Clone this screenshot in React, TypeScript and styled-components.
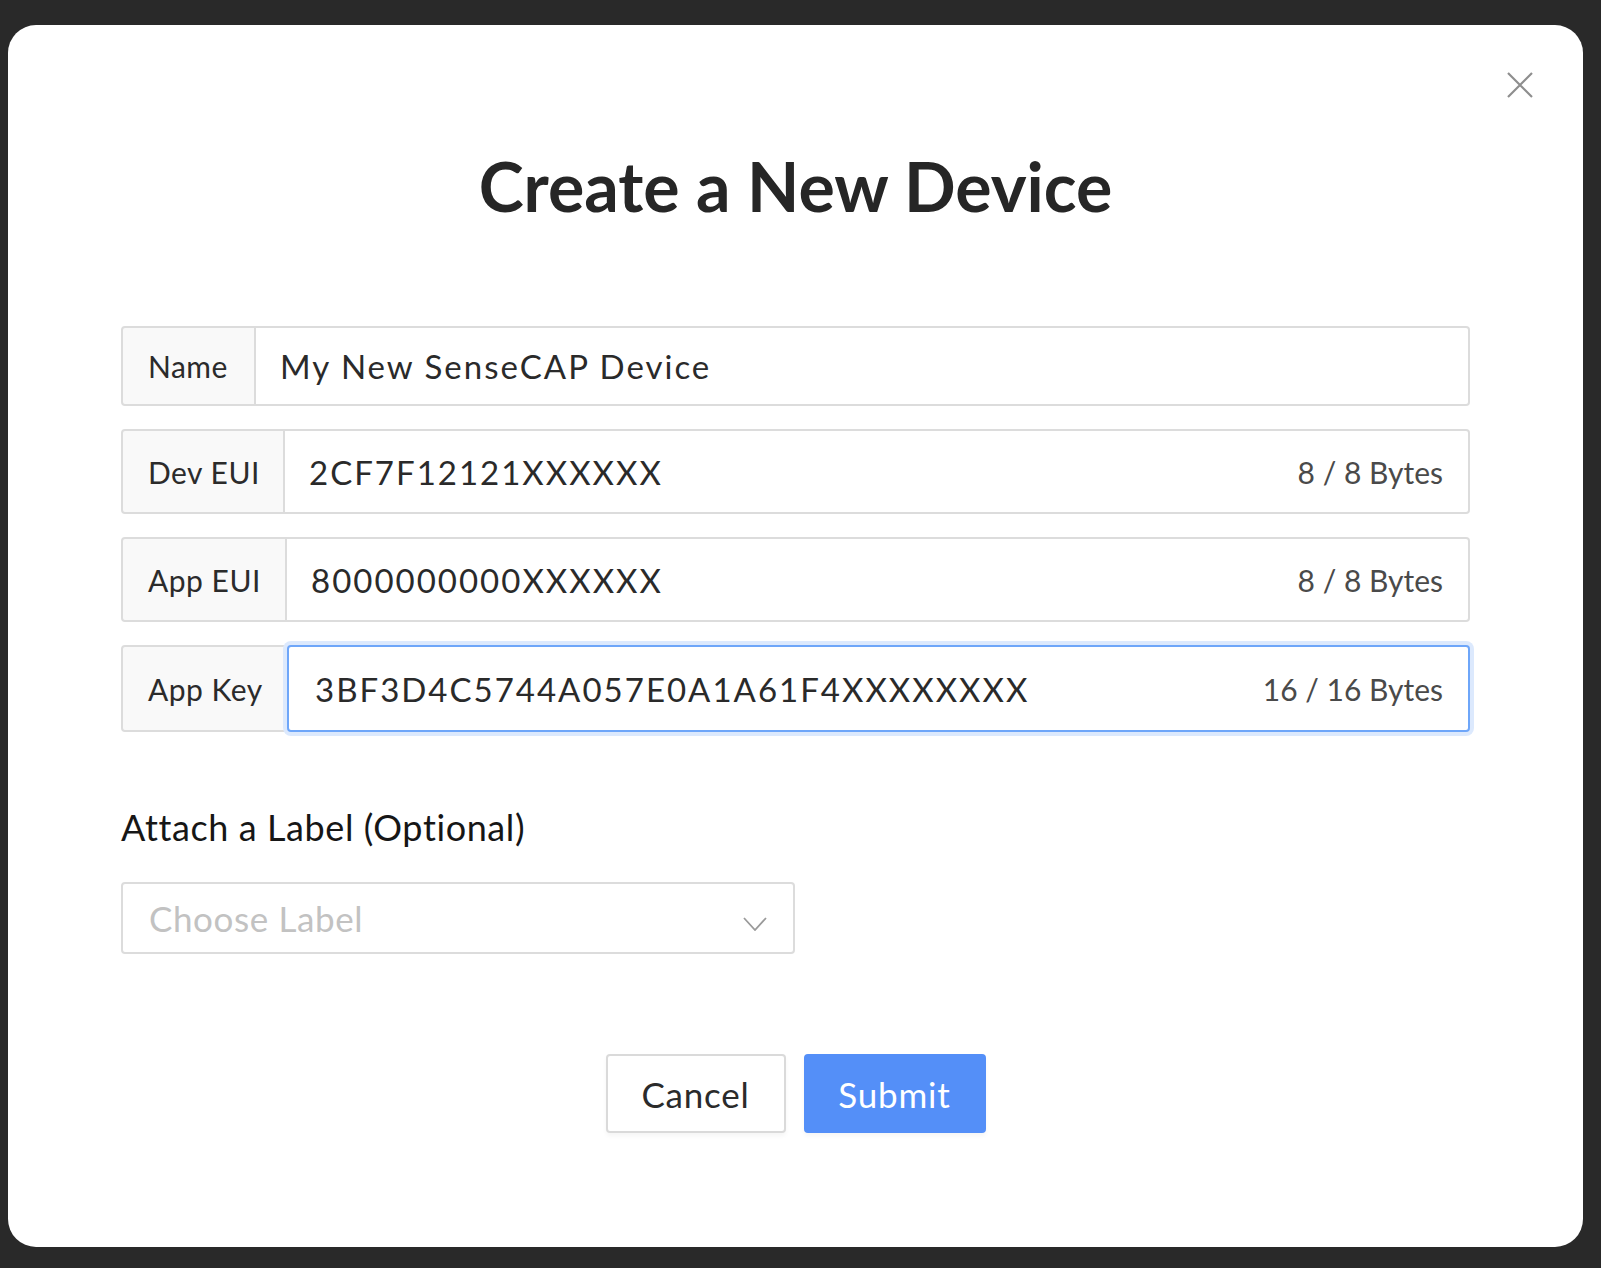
import React from "react";
import styled, { createGlobalStyle, css } from "styled-components";

const GlobalStyle = createGlobalStyle`
  html, body {
    margin: 0;
    padding: 0;
    background: #292929;
  }
  body {
    font-family: Lato, "Open Sans", "Liberation Sans", sans-serif;
    -webkit-font-smoothing: antialiased;
  }
  * { box-sizing: border-box; }
`;

const Page = styled.div`
  width: 1601px;
  height: 1268px;
  padding: 25px 18px 21px 8px;
  overflow: hidden;
`;

const Modal = styled.div`
  position: relative;
  height: 100%;
  background: #ffffff;
  border-radius: 28px;
  display: flex;
  flex-direction: column;
  padding: 0 113px;
`;

const Close = styled.button`
  position: absolute;
  top: 47px;
  right: 50px;
  width: 26px;
  height: 26px;
  padding: 0;
  border: none;
  background: transparent;
  cursor: pointer;
  display: flex;
`;

const Title = styled.h1`
  margin: 121px 0 0;
  text-align: center;
  font-size: 68px;
  line-height: 80px;
  font-weight: 700;
  color: #262626;
`;

const Fields = styled.div`
  margin-top: 100px;
  display: flex;
  flex-direction: column;
  gap: 23px;
`;

const Group = styled.div<{ $h: number }>`
  display: flex;
  height: ${(p) => p.$h}px;
`;

const Addon = styled.div<{ $w: number }>`
  flex: 0 0 ${(p) => p.$w}px;
  display: flex;
  align-items: center;
  padding-left: 25px;
  background: #f9f9f9;
  border: 2px solid #dcdcdc;
  border-radius: 4px 0 0 4px;
  font-size: 30px;
  letter-spacing: 0.5px;
  color: #2b2b2b;
  white-space: nowrap;
`;

const Field = styled.div<{ $focused?: boolean }>`
  flex: 1;
  display: flex;
  align-items: center;
  justify-content: space-between;
  padding: 0 25px 0 24px;
  border: 2px solid #dcdcdc;
  border-left: none;
  border-radius: 0 4px 4px 0;
  background: #fff;
  ${(p) =>
    p.$focused &&
    css`
      border: 2px solid #6ea6f9;
      border-radius: 4px;
      margin-left: -2px;
      padding-left: 26px;
      box-shadow: 0 0 0 4px #dce9fd;
      position: relative;
    `}
`;

const Value = styled.span`
  font-size: 33px;
  color: #2a2a2a;
  letter-spacing: 2px;
  white-space: nowrap;
`;

const Counter = styled.span`
  font-size: 30px;
  color: #4a4a4a;
  white-space: nowrap;
`;

const SectionLabel = styled.div`
  margin-top: 73px;
  font-size: 36px;
  line-height: 44px;
  color: #161616;
  letter-spacing: 0.6px;
`;

const Select = styled.div`
  margin-top: 33px;
  width: 674px;
  height: 72px;
  display: flex;
  align-items: center;
  justify-content: space-between;
  padding: 0 26px 0 26px;
  border: 2px solid #dcdcdc;
  border-radius: 4px;
  font-size: 35px;
  letter-spacing: 0.6px;
  color: #c2c2c2;
`;

const Chevron = styled.svg`
  margin-top: 12px;
`;

const Actions = styled.div`
  margin-top: 100px;
  display: flex;
  justify-content: center;
  gap: 18px;
`;

const Button = styled.button<{ $primary?: boolean }>`
  height: 79px;
  width: ${(p) => (p.$primary ? 182 : 180)}px;
  border-radius: 4px;
  font-family: inherit;
  font-size: 35px;
  letter-spacing: 0.8px;
  cursor: pointer;
  box-shadow: 0 3px 4px rgba(0, 0, 0, 0.04);
  ${(p) =>
    p.$primary
      ? css`
          background: #548ff8;
          border: 2px solid #548ff8;
          color: #ffffff;
        `
      : css`
          background: #ffffff;
          border: 2px solid #dadada;
          color: #2b2b2b;
        `}
`;

type Row = { label: string; value: string; counter?: string; w: number; h: number; focused?: boolean };

const rows: Row[] = [
  { label: "Name", value: "My New SenseCAP Device", w: 135, h: 80 },
  { label: "Dev EUI", value: "2CF7F12121XXXXXX", counter: "8 / 8 Bytes", w: 164, h: 85 },
  { label: "App EUI", value: "8000000000XXXXXX", counter: "8 / 8 Bytes", w: 166, h: 85 },
  { label: "App Key", value: "3BF3D4C5744A057E0A1A61F4XXXXXXXX", counter: "16 / 16 Bytes", w: 168, h: 87, focused: true },
];

export default function App() {
  return (
    <>
      <GlobalStyle />
      <Page>
        <Modal>
          <Close aria-label="Close">
            <svg width="26" height="26" viewBox="0 0 26 26">
              <path d="M1 1 L25 25 M25 1 L1 25" stroke="#8e8e8e" strokeWidth="2.2" fill="none" />
            </svg>
          </Close>
          <Title>Create a New Device</Title>
          <Fields>
            {rows.map((r) => (
              <Group key={r.label} $h={r.h}>
                <Addon $w={r.w}>{r.label}</Addon>
                <Field $focused={r.focused}>
                  <Value>{r.value}</Value>
                  {r.counter && <Counter>{r.counter}</Counter>}
                </Field>
              </Group>
            ))}
          </Fields>
          <SectionLabel>Attach a Label (Optional)</SectionLabel>
          <Select>
            <span>Choose Label</span>
            <Chevron width="24" height="14" viewBox="0 0 24 14">
              <path d="M1 1 L12 13 L23 1" stroke="#9a9a9a" strokeWidth="1.8" fill="none" />
            </Chevron>
          </Select>
          <Actions>
            <Button>Cancel</Button>
            <Button $primary>Submit</Button>
          </Actions>
        </Modal>
      </Page>
    </>
  );
}
